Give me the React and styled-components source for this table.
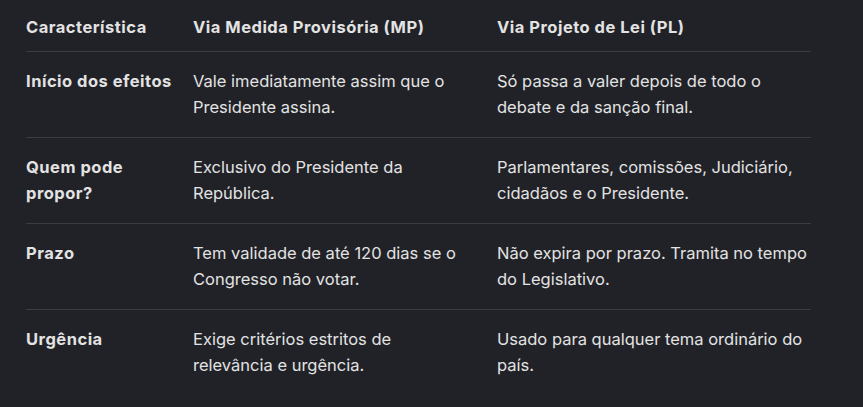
import React from 'react'
import styled, { createGlobalStyle } from 'styled-components';

const GlobalStyle = createGlobalStyle`
  html, body {
    margin: 0;
    padding: 0;
    background: #212227;
  }
  body {
    font-family: Inter, Roboto, "Noto Sans", "Liberation Sans", sans-serif;
    color: #e3e3e3;
  }
`

const rows = [
    {
        label: 'Início dos efeitos',
        mp: 'Vale imediatamente assim que o Presidente assina.',
        pl: 'Só passa a valer depois de todo o debate e da sanção final.',
    },
    {
        label: 'Quem pode propor?',
        mp: 'Exclusivo do Presidente da República.',
        pl: 'Parlamentares, comissões, Judiciário, cidadãos e o Presidente.',
    },
    {
        label: 'Prazo',
        mp: 'Tem validade de até 120 dias se o Congresso não votar.',
        pl: 'Não expira por prazo. Tramita no tempo do Legislativo.',
    },
    {
        label: 'Urgência',
        mp: 'Exige critérios estritos de relevância e urgência.',
        pl: 'Usado para qualquer tema ordinário do país.',
    },
]

const App = () => {
    return (
        <Page>
            <GlobalStyle />
            <Table>
                <Row $head>
                    <Cell $bold>Característica</Cell>
                    <Cell $bold $gap="30px">Via Medida Provisória (MP)</Cell>
                    <Cell $bold $gap="0">Via Projeto de Lei (PL)</Cell>
                </Row>
                {rows.map((row, i) => (
                    <Row key={row.label} $end={i === rows.length - 1}>
                        <Cell $bold>{row.label}</Cell>
                        <Cell $gap="30px">{row.mp}</Cell>
                        <Cell $gap="0">{row.pl}</Cell>
                    </Row>
                ))}
            </Table>
        </Page>
    )
}

const Page = styled.div`
    padding: 0 26px;
    height: 407px;
    overflow: hidden;
`

const Table = styled.div`
    width: 785px;
    display: flex;
    flex-direction: column;
`

const Row = styled.div`
    display: grid;
    grid-template-columns: 167px 304px 1fr;
    padding: ${p => p.$head ? '14px 0 10px' : '16px 0'};
    border-bottom: ${p => p.$end ? 'none' : '1px solid #3c3d41'};
`

const Cell = styled.div`
    font-size: 16.5px;
    line-height: 26.5px;
    font-weight: ${p => p.$bold ? 700 : 400};
    letter-spacing: ${p => p.$bold ? '0.5px' : '0'};
    padding-right: ${p => p.$gap ?? '16px'};
`

export default App
